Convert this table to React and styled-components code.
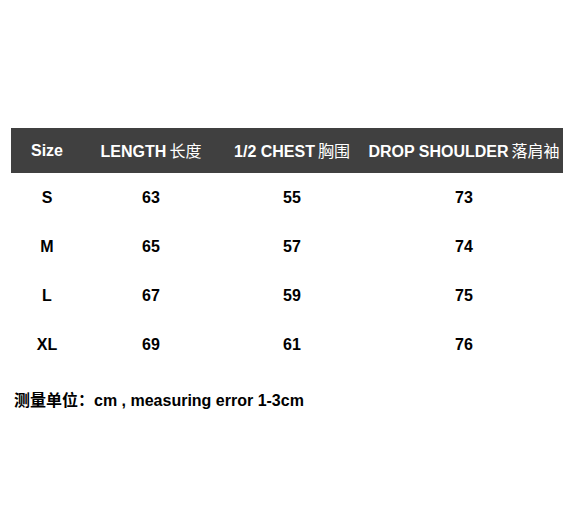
import React from 'react';
import styled, { createGlobalStyle } from 'styled-components';

const GlobalStyle = createGlobalStyle`
	html, body {
		margin: 0;
		padding: 0;
		background: #fff;
	}
	body {
		font-family: 'Liberation Sans', Arial, 'Noto Sans CJK SC', sans-serif;
	}
`;

const Page = styled.div`
	width: 583px;
	height: 506px;
	padding: 128px 0 0 11px;
	box-sizing: border-box;
`;

const Table = styled.div`
	display: grid;
	grid-template-columns: 72px 136px 146px 198px;
	width: 552px;
`;

const HeadCell = styled.div`
	height: 45px;
	background: #404040;
	color: #fff;
	font-weight: bold;
	font-size: 16px;
	line-height: 18px;
	display: flex;
	align-items: center;
	justify-content: center;
	white-space: nowrap;
`;

const Label = styled.span`
	display: block;
	line-height: 18px;
`;

const Cjk = styled.span`
	font-family: 'Noto Sans CJK SC', sans-serif;
	font-weight: ${(p) => (p.$bold ? 'bold' : 'normal')};
	margin-left: ${(p) => (p.$gap ? '3px' : '0')};
	line-height: 18px;
`;

const Cell = styled.div`
	height: 49px;
	display: flex;
	align-items: center;
	justify-content: center;
	font-weight: bold;
	font-size: 16px;
	color: #000;
`;

const Note = styled.div`
	margin: 21px 0 0 3px;
	font-size: 16px;
	line-height: 18px;
	font-weight: bold;
	color: #000;
	white-space: nowrap;
`;

const headers = [
	['Size', ''],
	['LENGTH', '长度'],
	['1/2 CHEST', '胸围'],
	['DROP SHOULDER', '落肩袖'],
];

const rows = [
	['S', 63, 55, 73],
	['M', 65, 57, 74],
	['L', 67, 59, 75],
	['XL', 69, 61, 76],
];

const App = () => (
	<>
		<GlobalStyle />
		<Page>
			<Table>
				{headers.map(([en, zh]) => (
					<HeadCell key={en}>
						<Label>
							{en}
							{zh && <Cjk $gap>{zh}</Cjk>}
						</Label>
					</HeadCell>
				))}
				{rows.map((row) =>
					row.map((v, i) => <Cell key={`${row[0]}-${i}`}>{v}</Cell>),
				)}
			</Table>
			<Note>
				<Cjk $bold>测量单位：</Cjk>
				cm , measuring error 1-3cm
			</Note>
		</Page>
	</>
);

export default App;
